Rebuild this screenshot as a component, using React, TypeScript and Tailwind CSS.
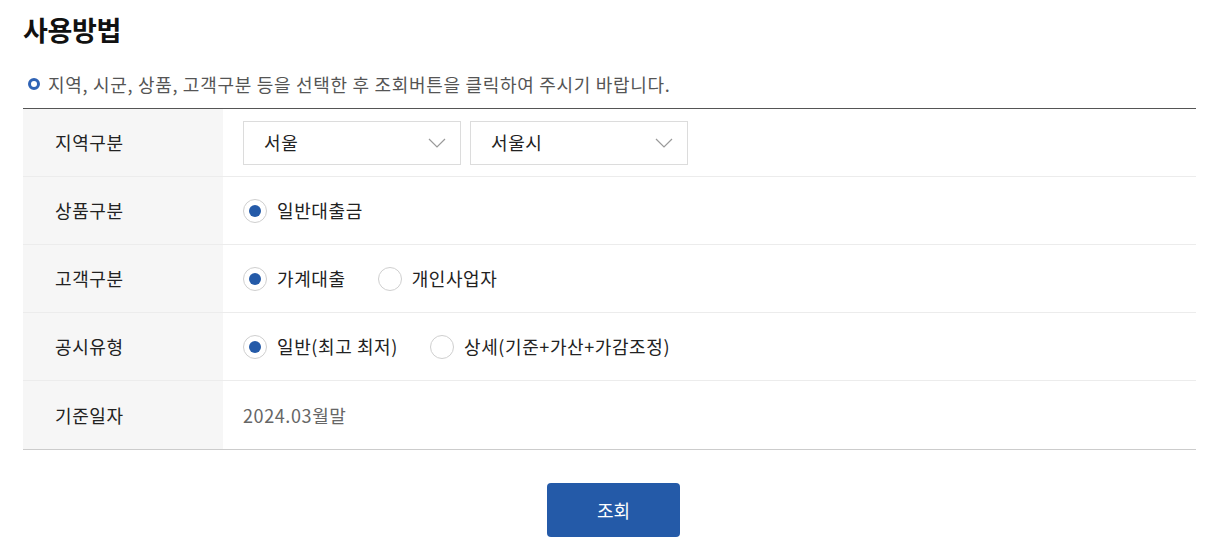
import React from "react";

function Chevron() {
  return (
    <svg width="18" height="10" viewBox="0 0 18 10" fill="none">
      <path d="M1 1l8 8 8-8" stroke="#9a9a9a" strokeWidth="1.2" />
    </svg>
  );
}

function Select({ value }: { value: string }) {
  return (
    <div className="flex h-[44px] w-[218px] items-center justify-between border border-[#dcdcdc] bg-white pl-[20px] pr-[14px] text-[18px] tracking-[0.6px] text-[#222]">
      <span>{value}</span>
      <Chevron />
    </div>
  );
}

function Radio({ label, checked }: { label: string; checked?: boolean }) {
  return (
    <div className="flex items-center gap-[10px]">
      <div className="flex h-[24px] w-[24px] items-center justify-center rounded-full border border-[#cfcfcf] bg-white">
        {checked && <div className="h-[12px] w-[12px] rounded-full bg-[#245aa8]" />}
      </div>
      <span className="text-[18px] tracking-[0.6px] text-[#222]">{label}</span>
    </div>
  );
}

function Row({ label, children, last }: { label: string; children: React.ReactNode; last?: boolean }) {
  return (
    <div className={`flex h-[68px] ${last ? "" : "border-b border-[#ececec]"}`}>
      <div className="flex w-[200px] items-center bg-[#f6f6f6] pl-[32px] text-[18px] tracking-[0.6px] text-[#222]">{label}</div>
      <div className="flex flex-1 items-center pl-[20px]">{children}</div>
    </div>
  );
}

export default function App() {
  return (
    <div
      className="w-[1232px] bg-white pl-[23px] pr-[36px] pt-[12px]"
      style={{ fontFamily: '"Noto Sans CJK KR", "Noto Sans", sans-serif' }}
    >
      <h1 className="text-[27px] font-bold leading-[36px] tracking-[-0.3px] text-[#111]">사용방법</h1>
      <div className="mt-[24px] flex items-center gap-[8px] pl-[5px]">
        <div className="h-[12px] w-[12px] rounded-full border-[3px] border-[#2f63b5]" />
        <p className="text-[18px] leading-[24px] tracking-[0.7px] text-[#555]">
          지역, 시군, 상품, 고객구분 등을 선택한 후 조회버튼을 클릭하여 주시기 바랍니다.
        </p>
      </div>
      <div className="mt-[12px] border-t border-t-[#555] border-b border-b-[#cccccc]">
        <Row label="지역구분">
          <div className="flex gap-[9px]">
            <Select value="서울" />
            <Select value="서울시" />
          </div>
        </Row>
        <Row label="상품구분">
          <Radio label="일반대출금" checked />
        </Row>
        <Row label="고객구분">
          <div className="flex gap-[32px]">
            <Radio label="가계대출" checked />
            <Radio label="개인사업자" />
          </div>
        </Row>
        <Row label="공시유형">
          <div className="flex gap-[32px]">
            <Radio label="일반(최고 최저)" checked />
            <Radio label="상세(기준+가산+가감조정)" />
          </div>
        </Row>
        <Row label="기준일자" last>
          <span className="text-[18px] tracking-[0.6px] text-[#666]">2024.03월말</span>
        </Row>
      </div>
      <div className="flex justify-center pt-[33px] pb-[12px] pl-[8px]">
        <button className="h-[54px] w-[133px] rounded-[4px] bg-[#245aa8] text-[18px] text-white">조회</button>
      </div>
    </div>
  );
}
